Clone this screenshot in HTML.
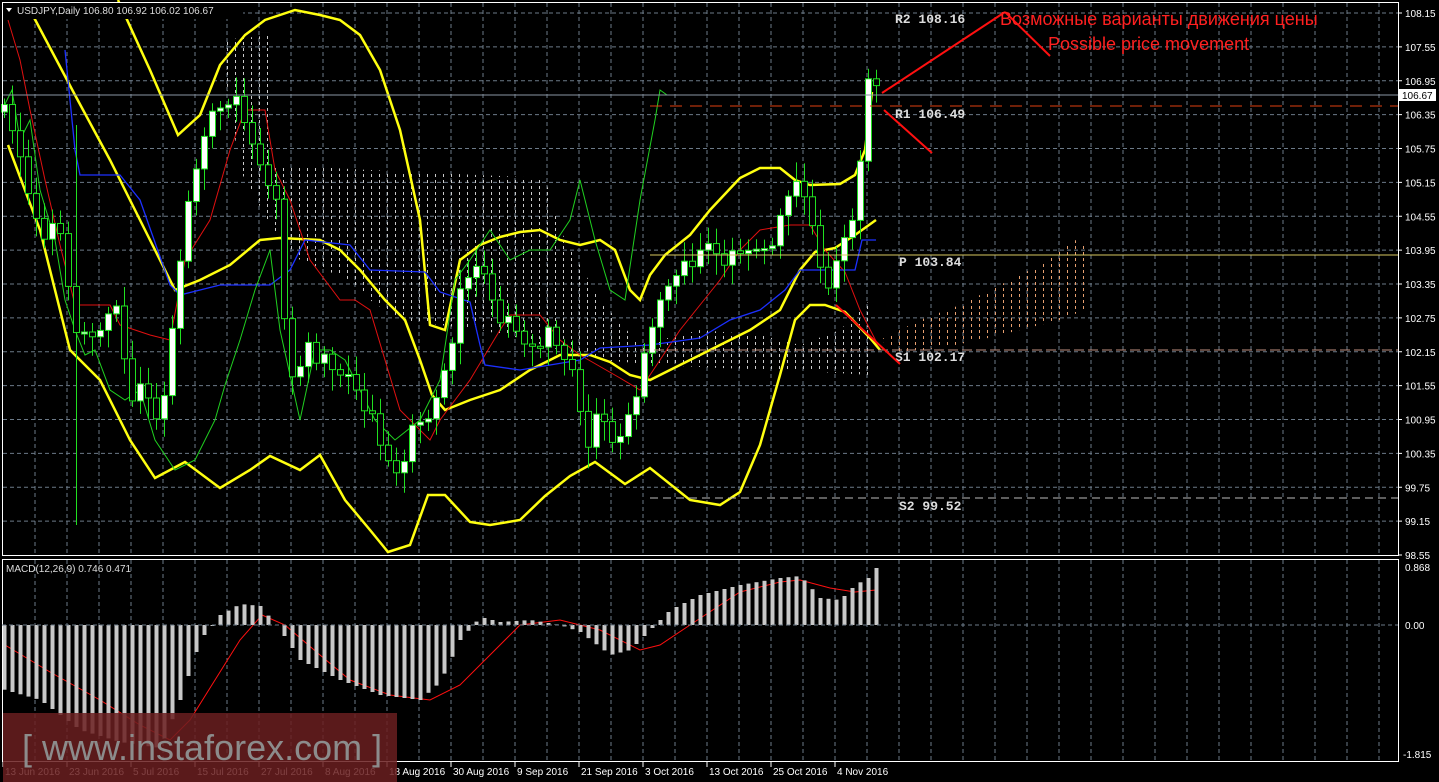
<!DOCTYPE html>
<html><head><meta charset="utf-8"><style>
html,body{margin:0;padding:0;background:#000;overflow:hidden}
svg{display:block}
text{font-family:"Liberation Sans",sans-serif}
.ax{fill:#fff;font-size:10px}
.lv{fill:#ddd;font-family:"Liberation Mono",monospace;font-size:13px;font-weight:bold}
</style></head><body>
<svg id="s" width="1439" height="782" viewBox="0 0 1439 782" xmlns="http://www.w3.org/2000/svg">
<defs>
<pattern id="cw" width="8" height="6" patternUnits="userSpaceOnUse"><rect x="3" y="0" width="1" height="3" fill="#ccc"/></pattern>
<pattern id="co" width="8" height="6" patternUnits="userSpaceOnUse"><rect x="3" y="0" width="1" height="3" fill="#e8a070"/></pattern>
</defs>
<rect width="1439" height="782" fill="#000"/>
<g id="grid" stroke="#6c7a88" stroke-dasharray="4,3" stroke-width="1"></g>
<polygon fill="url(#cw)" points="220,40 275,35 275,165 370,170 545,178 560,230 600,300 640,345 700,330 760,335 800,345 840,330 870,300 870,375 820,372 780,370 720,368 660,365 600,360 560,350 520,338 480,330 440,325 400,320 370,300 350,280 300,260 270,225 240,170"/>
<polygon fill="url(#co)" points="880,340 920,320 960,305 1000,285 1040,265 1075,240 1085,245 1085,310 1060,320 1020,330 980,340 940,348 900,352"/>
<g id="ind" fill="none"></g>
<g id="cdl"></g>
<line x1="2" y1="95" x2="1398" y2="95" stroke="#8a96a4"/>
<line x1="650" y1="106" x2="1398" y2="106" stroke="#e04010" stroke-dasharray="12,8"/>
<line x1="650" y1="255" x2="1398" y2="255" stroke="#d8c860"/>
<line x1="640" y1="350" x2="1398" y2="350" stroke="#c09080" stroke-dasharray="10,4"/>
<line x1="650" y1="498" x2="1398" y2="498" stroke="#bbb" stroke-dasharray="8,5"/>
<text class="lv" x="895" y="23">R2 108.16</text>
<text class="lv" x="895" y="118">R1 106.49</text>
<text class="lv" x="899" y="266">P 103.84</text>
<text class="lv" x="895" y="361">S1 102.17</text>
<text class="lv" x="899" y="510">S2 99.52</text>
<g stroke="#ff1010" stroke-width="2">
<line x1="882" y1="93" x2="1005" y2="12"/>
<line x1="1005" y1="12" x2="1050" y2="56"/>
<line x1="884" y1="110" x2="932" y2="153"/>
<line x1="836" y1="305" x2="900" y2="364"/>
</g>
<text x="1000" y="25" fill="#ff2020" font-size="18">Возможные варианты движения цены</text>
<text x="1048" y="50" fill="#ff2020" font-size="18">Possible price movement</text>
<rect x="2.5" y="2.5" width="1396" height="553" fill="none" stroke="#fff"/>
<rect x="2.5" y="559.5" width="1396" height="202" fill="none" stroke="#fff"/>
<line x1="2" y1="625" x2="1398" y2="625" stroke="#6c7a88" stroke-dasharray="4,3"/>
<g id="axis"></g>
<rect x="1398" y="89" width="38" height="12" fill="#fff"/>
<text x="1402" y="99" font-size="10" fill="#000">106.67</text>
<text class="ax" x="1405" y="571">0.868</text>
<text class="ax" x="1405" y="629">0.00</text>
<text class="ax" x="1403" y="758">-1.815</text>
<text x="6" y="572" font-size="10" fill="#ddd">MACD(12,26,9) 0.746 0.471</text>
<rect x="3" y="3" width="240" height="16" fill="#000"/>
<polygon points="6,8 12,8 9,12" fill="#fff"/>
<text x="17" y="14" font-size="10" fill="#ddd">USDJPY,Daily  106.80 106.92 106.02 106.67</text>
<rect x="3" y="713" width="394" height="69" fill="#6a1e20" opacity="0.85"/>
<text x="22" y="760" font-size="36" fill="#8c8c8c">[ www.instaforex.com ]</text>
</svg>
<script>
var NS="http://www.w3.org/2000/svg";
function el(p,t,a){var e=document.createElementNS(NS,t);for(var k in a)e.setAttribute(k,a[k]);p.appendChild(e);return e}
function interp(pts,x){for(var i=0;i<pts.length-1;i++){if(x<=pts[i+1][0]){var a=pts[i],b=pts[i+1];return a[1]+(b[1]-a[1])*(x-a[0])/(b[0]-a[0]);}}return pts[pts.length-1][1];}
var g=document.getElementById('grid');
for(var x=3+32;x<1398;x+=32){el(g,'line',{x1:x,y1:3,x2:x,y2:555});el(g,'line',{x1:x,y1:560,x2:x,y2:761});}
for(var k=0;k<16;k++){var y=13+k*33.875;el(g,'line',{x1:3,y1:y,x2:1398,y2:y});}
var ax=document.getElementById('axis');
for(var k=0;k<17;k++){var y=13+k*33.875;var t=el(ax,'text',{x:1405,y:y+4,'class':'ax'});t.textContent=(108.15-0.6*k).toFixed(2);el(ax,'line',{x1:1398,y1:y,x2:1402,y2:y,stroke:'#fff'});}
var dates=["13 Jun 2016","23 Jun 2016","5 Jul 2016","15 Jul 2016","27 Jul 2016","8 Aug 2016","18 Aug 2016","30 Aug 2016","9 Sep 2016","21 Sep 2016","3 Oct 2016","13 Oct 2016","25 Oct 2016","4 Nov 2016"];
dates.forEach(function(d,i){var x=3+64*i;var t=el(ax,'text',{x:x+2,y:775,'class':'ax'});t.textContent=d;el(ax,'line',{x1:x,y1:762,x2:x,y2:767,stroke:'#fff'});});
var ind=document.getElementById('ind');
function pl(pts,c,w){el(ind,'polyline',{points:pts.map(function(p){return p.join(',')}).join(' '),stroke:c,'stroke-width':w});}
pl([[118,0],[150,70],[178,135],[200,115],[220,65],[245,35],[265,20],[295,10],[320,15],[340,20],[360,35],[380,70],[400,130],[420,220],[430,325],[445,330],[460,260],[480,245],[500,237],[520,232],[540,230],[560,240],[580,245],[600,240],[615,250],[630,290],[640,300],[650,275],[665,255],[690,235],[710,210],[740,178],[760,168],[780,168],[795,180],[810,185],[840,184],[855,175],[865,150],[872,92]],'#ffff10',2.5);
pl([[30,10],[75,95],[110,160],[150,240],[175,290],[200,280],[230,265],[260,240],[280,238],[320,240],[340,250],[360,270],[385,300],[405,320],[420,360],[432,395],[445,410],[470,400],[500,390],[530,370],[560,355],[590,355],[610,362],[630,375],[650,380],[680,365],[720,345],[750,330],[780,310],[800,270],[815,252],[835,248],[855,235],[876,220]],'#ffff10',2.5);
pl([[8,145],[40,230],[70,350],[100,380],[130,440],[155,478],[185,462],[220,488],[250,470],[270,456],[300,470],[320,455],[345,500],[370,530],[388,552],[410,545],[428,495],[445,495],[470,522],[490,525],[520,520],[545,496],[570,476],[595,462],[625,484],[650,468],[690,500],[720,505],[740,492],[760,445],[780,375],[795,320],[810,305],[825,305],[845,312],[870,338],[880,350]],'#ffff10',2.5);
pl([[8,20],[20,60],[30,110],[45,180],[60,245],[75,305],[110,305],[120,325],[150,335],[170,340],[185,260],[210,220],[230,150],[245,110],[265,110],[275,170],[290,200],[310,260],[340,300],[355,300],[370,310],[400,410],[430,440],[440,420],[470,380],[500,330],[510,315],[540,315],[560,340],[580,355],[620,378],[640,390],[680,330],[720,280],[740,250],[760,230],[790,225],[810,225],[825,250],[845,272],[860,310],[878,345]],'#e01010',1);
pl([[65,50],[75,150],[80,175],[120,175],[140,200],[170,285],[180,295],[220,285],[240,285],[270,285],[290,270],[305,240],[350,245],[370,270],[425,272],[440,292],[470,302],[480,345],[485,365],[520,370],[580,360],[600,348],[650,345],[700,338],[730,320],[760,310],[785,290],[800,270],[835,270],[855,270],[862,240],[876,240]],'#1c30ff',1.3);
pl([[2,110],[12,90],[20,140],[30,120],[40,190],[55,240],[65,300],[75,330],[85,355],[95,350],[110,390],[125,400],[140,390],[155,440],[175,470],[195,460],[215,420],[225,385],[240,340],[255,290],[270,250],[280,330],[300,420],[315,350],[330,350],[345,360],[360,390],[375,420],[395,440],[420,420],[440,380],[455,280],[470,260],[490,230],[510,260],[530,250],[550,250],[570,220],[580,180],[595,240],[610,290],[625,300],[640,200],[655,120],[660,90],[667,95]],'#20d020',1);
var path=[[5,120],[20,160],[30,200],[45,230],[60,240],[75,330],[90,320],[100,340],[115,300],[130,390],[145,400],[160,430],[170,340],[180,250],[195,180],[210,110],[230,90],[245,130],[260,160],[275,190],[280,300],[295,400],[305,330],[320,360],[335,380],[350,370],[365,400],[380,450],[395,470],[410,440],[430,420],[445,360],[460,300],[480,260],[495,300],[510,330],[525,345],[545,335],[560,360],[575,370],[585,440],[600,420],[615,450],[630,400],[645,360],[660,300],[675,265],[690,280],[705,240],[720,250],[735,265],[750,250],[765,240],[780,225],[795,180],[810,200],[820,280],[830,300],[840,240],[850,230],[860,150],[868,90],[876,92]];
var cg=document.getElementById('cdl');var pv=interp(path,2);
for(var i=0;i<110;i++){var cx=4+i*8;if(cx>878)break;var c=interp(path,cx)+((i*37)%17-8)*1.6;var o=pv;pv=c;
var hi=Math.min(o,c)-6-(i*13)%14,lo=Math.max(o,c)+6+(i*7)%16;if(i==9){hi=125;lo=525}
el(cg,'line',{x1:cx+0.5,y1:hi,x2:cx+0.5,y2:lo,stroke:'#20e020'});
var ty=Math.min(o,c),bh=Math.max(Math.abs(o-c),2);
el(cg,'rect',{x:cx-2.5,y:ty,width:6,height:bh,fill:(c<o?'#fff':'#000'),stroke:'#20e020','stroke-width':1});}
var mh=[[5,690],[40,700],[80,730],[120,742],[160,748],[180,700],[200,640],[220,615],[240,604],[260,606],[280,630],[300,660],[340,680],[380,695],[420,700],[440,682],[460,640],[480,617],[500,622],[530,620],[560,625],[580,632],[610,655],[630,650],[650,630],[670,610],[700,595],[740,585],[780,578],[800,576],[820,598],[840,600],[855,585],[868,578],[876,568]];
for(var i=0;i<110;i++){var cx=4+i*8;if(cx>878)break;var y=interp(mh,cx);el(cg,'rect',{x:cx-1.5,y:Math.min(y,625),width:4,height:Math.abs(625-y)||1,fill:'#c8c8c8'});}
pl([[5,645],[50,672],[100,700],[140,725],[170,740],[190,720],[215,680],[240,640],[262,615],[285,625],[320,655],[350,680],[390,695],[430,700],[460,685],[490,655],[520,625],[560,620],[600,630],[640,650],[660,645],[690,625],[740,592],[780,582],[800,580],[830,588],[855,592],[876,590]],'#ff1010',1);
</script>
</body></html>
